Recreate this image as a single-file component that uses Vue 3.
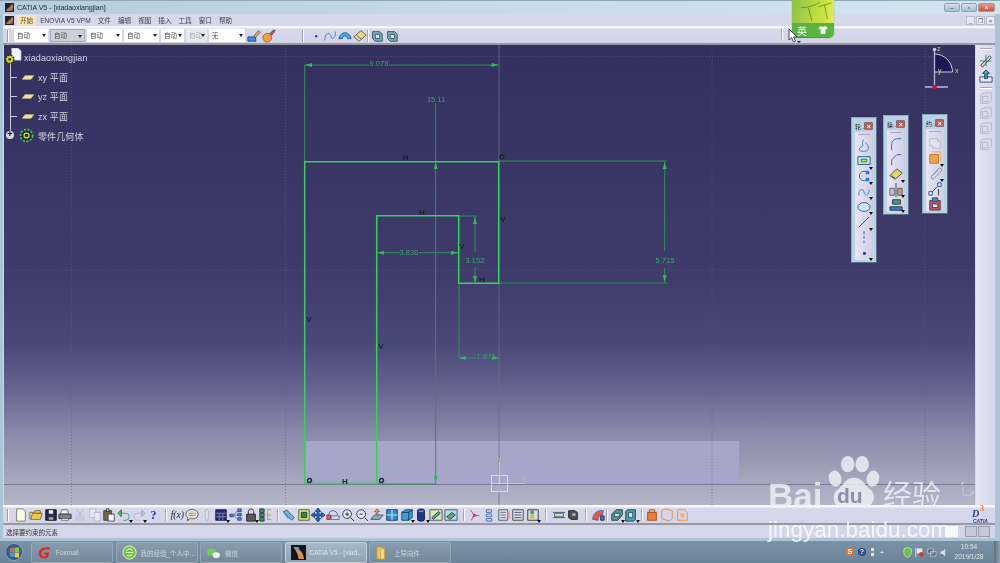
<template>
  <div class="screen">
    <!-- window chrome -->
    <div class="titlebar">
      <span class="app-logo"></span>
      <span class="title">CATIA V5 - [xiadaoxiangjian]</span>
      <div class="win-btns">
        <span class="wb">–</span>
        <span class="wb">▫</span>
        <span class="wb close">×</span>
      </div>
    </div>

    <div class="menubar">
      <span class="app-logo small"></span>
      <span v-for="m in menus" :key="m" class="menu" :class="{ active: m === '开始' }">{{ m }}</span>
      <div class="mdi-btns">
        <span>_</span><span>❐</span><span>×</span>
      </div>
    </div>

    <div class="toolbar top">
      <span class="grip"></span>
      <span
        v-for="(d, i) in combos"
        :key="i"
        class="combo"
        :class="{ sel: d.sel, dis: d.dis }"
        :style="{ width: d.w + 'px' }"
      >{{ d.t }}<i></i></span>
      <template v-for="(t, i) in topTools" :key="i">
        <span v-if="t.sep" class="sep" :style="{ marginLeft: t.ml + 'px', marginRight: t.mr + 'px' }"></span>
        <span v-else class="tool"><Ico :n="t.n" /></span>
      </template>
      <span class="sep far"></span>
    </div>

    <div class="main">
      <div class="canvas">
        <svg class="drawing" viewBox="4 45 971 460">
          <!-- pad seen edge-on -->
          <rect x="306" y="441" width="433" height="43" fill="#a6a6cb" />
          <!-- grid -->
          <g stroke="#5f5d88" stroke-width=".6" stroke-dasharray="1 2" fill="none">
            <path d="M4 56.5H975M4 270H975M71.5 45V505M285.5 45V505M712 45V505M925 45V505" />
          </g>
          <path d="M499 45V505" stroke="#6d6c90" stroke-width=".8" />
          <path d="M4 484.5H975" stroke="#6f6f8c" stroke-width=".8" />
          <!-- dimensions -->
          <g stroke="#2f9159" stroke-width="1" fill="none">
            <path d="M304.7 65V161M304.7 65H369M389 65H498.7" />
            <path d="M435.7 103V484M377 484H436" />
            <path d="M499 161H667M499 283H667M664.7 162V251M664.7 268V282" />
            <path d="M377 252.7H400M419 252.7H458" />
            <path d="M459 216H477M475 217V252M475 267V283" />
            <path d="M459 284V358M459 358H476M496 358H499" />
          </g>
          <g fill="#36b560">
            <path d="M305 65l7-2v4zM498.7 65l-7-2v4zM435.7 162l-2 7h4zM435.7 483l-2-7h4zM664.7 162l-2 7h4zM664.7 282l-2-7h4zM377 252.7l7-2v4zM458 252.7l-7-2v4zM475 217l-2 7h4zM475 283l-2-7h4zM459 358l7-2v4zM499 358l-7-2v4z" />
          </g>
          <g class="dim-text">
            <text x="379" y="66">9.078</text>
            <text x="436" y="102">15.11</text>
            <text x="409" y="255">3.836</text>
            <text x="475" y="263">3.152</text>
            <text x="665" y="263">5.715</text>
            <text x="486" y="359">1.872</text>
          </g>
          <!-- profile -->
          <path
            d="M304.7 483.5V161.7H498.7V283.3H458.7V215.7H376.7V483.5Z"
            fill="none"
            stroke="#37d15a"
            stroke-width="1.5"
          />
          <!-- constraints -->
          <g class="cons">
            <text x="405.6" y="160">H</text>
            <text x="422" y="215">H</text>
            <text x="482" y="282">H</text>
            <text x="503" y="222">V</text>
            <text x="462" y="249">V</text>
            <text x="309" y="322">V</text>
            <text x="381" y="349">V</text>
            <text x="345" y="484">H</text>
          </g>
          <g fill="none" stroke="#15302a" stroke-width="1.4">
            <circle cx="309.5" cy="480.5" r="2" />
            <circle cx="381.5" cy="480.5" r="2" />
            <circle cx="502" cy="157" r="2" />
          </g>
          <!-- sketch axes -->
          <rect x="491.5" y="475.5" width="16" height="16" fill="none" stroke="#d8d8e6" stroke-width="1" />
          <path d="M499.5 484V462M499.5 483.5H525" stroke="#d8d060" stroke-width="1.2" fill="none" />
          <path d="M499 475.5V491.5M491.5 483.5H507.5" stroke="#d8d8e6" stroke-width=".8" />
          <text x="499" y="461" class="axis-y">V</text>
          <text x="524" y="482" class="axis-y">H</text>
          <!-- compass -->
          <path d="M934.5 54V72H952.5A18 18 0 0 0 934.5 54Z" fill="#1c1a55" stroke="#c9c6ee" />
          <path d="M934.5 49V87M925 87H948" stroke="#b9b6e4" stroke-width="1.3" fill="none" />
          <circle cx="934.5" cy="49.5" r="1.8" fill="#c9c6ee" />
          <circle cx="934.5" cy="87" r="2.3" fill="#d01030" />
          <text x="937" y="51" class="axis-c">z</text>
          <text x="938" y="73" class="axis-c">y</text>
          <text x="955" y="73" class="axis-c">x</text>
          <!-- small corner axes -->
          <path d="M963 486V495H972" stroke="#d8d8e4" stroke-width=".7" fill="none" />
          <text x="961" y="485" class="axis-s">z</text>
          <text x="971" y="494" class="axis-s">x</text>
        </svg>

        <!-- specification tree -->
        <div class="tree">
          <span class="trunk"></span>
          <div class="node root">
            <svg class="root-ico" viewBox="0 0 18 18">
              <path d="M7 0h7l3 3v10H7z" fill="#f2f6fb" stroke="#90a8d0" stroke-width=".7" />
              <circle cx="5" cy="12" r="4.4" fill="#d8d22c" stroke="#243a16" stroke-width="1.6" stroke-dasharray="2 1" />
              <circle cx="5" cy="12" r="1.5" fill="#1c3a22" />
            </svg>
            xiadaoxiangjian
          </div>
          <div v-for="p in planes" :key="p" class="node branch">
            <span class="twig"></span>
            <svg class="plane" viewBox="0 0 12 5"><path d="M3 0.5H12L9 4.5H0Z" fill="#eee0a0" stroke="#c8b050" stroke-width=".4" /></svg>
            {{ p }} 平面
          </div>
          <div class="node branch body">
            <span class="plus">+</span>
            <svg class="gear" viewBox="0 0 16 16">
              <circle cx="8" cy="8" r="6.4" fill="#16303a" stroke="#4dc070" stroke-width="1.8" stroke-dasharray="2.4 1.4" />
              <circle cx="8" cy="8" r="2.6" fill="none" stroke="#d8d83a" stroke-width="1.4" />
            </svg>
            零件几何体
          </div>
        </div>

        <!-- floating toolbars -->
        <div v-for="p in palettes" :key="p.t" class="palette" :style="{ left: p.x + 'px', top: p.y + 'px' }">
          <div class="pal-head"><span>{{ p.t }}</span><b>×</b></div>
          <div class="pal-body">
            <span class="pal-grip"></span>
            <span v-for="(t, i) in p.tools" :key="i" class="pal-tool" :class="{ more: t.a }"><Ico :n="t.n" /></span>
          </div>
        </div>
      </div>

      <div class="side">
        <span class="side-grip"></span>
        <span class="tool"><Ico n="sketch" /></span>
        <span class="tool"><Ico n="exit" /></span>
        <span class="side-grip gap"></span>
        <span v-for="n in 4" :key="n" class="tool"><Ico n="ghost" /></span>
      </div>
    </div>

    <div class="toolbar bottom">
      <span class="grip"></span>
      <template v-for="(t, i) in bottomTools" :key="i">
        <span v-if="t.sep" class="sep" :style="{ marginLeft: t.sep[0] + 'px', marginRight: t.sep[1] + 'px' }"></span>
        <span v-else-if="t.txt" class="tool txt" :class="t.c">{{ t.txt }}</span>
        <span v-else class="tool" :class="{ more: t.a }"><Ico :n="t.n" /></span>
      </template>
      <span class="ds-logo"><b>3</b><em>D</em><i>CATIA</i></span>
    </div>

    <div class="statusbar">
      <span class="status-text">选择要约束的元素</span>
      <span class="status-input"></span>
      <span class="status-btn"></span>
      <span class="status-btn"></span>
    </div>
    <div class="status-gap"></div>

    <div class="taskbar">
      <span class="orb">
        <svg viewBox="0 0 12 12">
          <path d="M1 2l4.5-.8V5.6H1z" fill="#f0603a" />
          <path d="M6.2 1.1L11 .4v5.2H6.2z" fill="#8cc83c" />
          <path d="M1 6.4h4.5v4.4L1 10z" fill="#3a9ae8" />
          <path d="M6.2 6.4H11v5.2l-4.8-.7z" fill="#f4c830" />
        </svg>
      </span>
      <div v-for="b in tasks" :key="b.t" class="task" :class="{ on: b.on }">
        <svg class="task-ico" viewBox="0 0 16 16">
          <path v-for="(p, i) in I[b.n]" :key="i" :d="p[0]" :fill="p[1]" :stroke="p[2] || 'none'" />
        </svg>
        <span>{{ b.t }}</span>
      </div>
      <div class="tray">
        <span class="tray-dot s">S</span>
        <span class="tray-dot q">?</span>
        <span class="tray-pair"></span>
        <span class="tray-up"></span>
        <svg class="tray-ico wide" viewBox="0 0 48 12">
          <path d="M1 2l4-1.5L9 2v4c0 3-2 4.5-4 5.5C3 10.500 1 9 1 6z" fill="#6cc04a" stroke="#e8f4d8" stroke-width=".7" />
          <path d="M14 1V11" stroke="#dde" /><path d="M15 1.500h6V7h-6z" fill="#e8e8ee" /><circle cx="20" cy="8" r="2.600" fill="#d83838" />
          <path d="M27 2h6v5h-6zM30 5h6v5h-6z" fill="#5a6c7c" stroke="#dde" stroke-width=".7" />
          <path d="M41 4.500h2L46 2v8L43 7.500h-2z" fill="#dde" />
        </svg>
        <div class="clock"><span>10:54</span><span>2019/1/28</span></div>
        <span class="show-desk"></span>
      </div>
    </div>

    <!-- IME floating widget -->
    <div class="ime">
      <div class="ime-top">
        <svg viewBox="0 0 42 24">
          <path d="M8 8Q20 8 28 2M16 8L20 22M27 7Q34 5 40 3M33 5L36 20" stroke="#3f7f2a" stroke-width=".7" fill="none" />
        </svg>
      </div>
      <div class="ime-bot">
        <span>英</span>
        <svg viewBox="0 0 12 10"><path d="M3 0L0 2.500 2 4.500 3 4V10H9V4L10 4.500 12 2.500 9 0Q6 2 3 0Z" fill="#f2f8ea" /></svg>
      </div>
    </div>
    <svg class="cursor" viewBox="0 0 10 14"><path d="M1 0V11L3.500 8.600 5.500 13 7.500 12 5.500 8H9Z" fill="#fff" stroke="#223" stroke-width=".8" /></svg>
    <span class="cursor-arrow"></span>

    <!-- watermark -->
    <div class="mark">
      <svg class="paw" viewBox="0 0 60 62">
        <ellipse cx="9" cy="25" rx="7" ry="9" transform="rotate(-14 9 25)" />
        <ellipse cx="23" cy="9" rx="7.500" ry="9" />
        <ellipse cx="39" cy="9" rx="7.500" ry="9" />
        <ellipse cx="51" cy="25" rx="7" ry="9" transform="rotate(14 51 25)" />
        <path d="M30 24C40 24 42 33 48 37 56 43 52 57 41 57 36 57 34 55 30 55 26 55 23 57 18 57 7 57 4 43 12 37 18 33 20 24 30 24Z" />
      </svg>
      <div class="mark-row"><span class="bai">Bai</span><span class="du">du</span><span class="jy">经验</span></div>
      <div class="mark-url">jingyan.baidu.com</div>
    </div>
  </div>
</template>

<script setup>
import { h } from 'vue'

// every icon is a list of [d, fill, stroke] on a 16x16 grid
const I = {
  brush: [['M1 9h9v5H1z', '#3c8ad8', '#1c4a90'], ['M8 8l5-6 2 2-6 6z', '#e0c050', '#555']],
  ball: [['M1 10a5 5 0 1 0 10 0a5 5 0 1 0-10 0', '#f0a040', '#c05030'], ['M9 5l5-4 1 1-4 5z', '#dd5060', '#345']],
  dot: [['M7 7h2.500v2.500H7z', '#1a3a90']],
  curve: [['M2 13C2 6 6 3 8 6S9 12 12 10 14 5 14 3', 'none', '#2a80c8']],
  arc: [['M1 11C3 2 13 2 15 11L11 11C10 7 6 7 5 11Z', '#48a8e8', '#1c5a98']],
  eraser: [['M1 9L9 2 15 7 7 14Z', '#ecd878', '#556'], ['M4 7l6 5', 'none', '#667']],
  cube1: [['M3 3h8l3 3v8H6l-3-3z', '#7fb0b8', '#284a60'], ['M6 6h5v5H6z', '#d8e8ee', '#284a60']],
  doc: [['M3 1h7l3 3v11H3z', '#fbf8e4', '#777']],
  open: [['M1 5h5l1-2h6v3H4L2 13h11l2-7H4', '#f0c850', '#8a6a20'], ['M1 5v8', 'none', '#8a6a20']],
  save: [['M2 2h12v12H2z', '#232a58', '#111'], ['M5 2h6v5H5z', '#eef', '#333'], ['M5 10h6v4H5z', '#aab', '#333']],
  print: [['M4 2h7l1 5H3z', '#eee', '#666'], ['M1 7h14v5H1z', '#7a8090', '#333'], ['M4 12h8v2H4z', '#fff', '#666']],
  cut: [['M4 1l6 9M12 1L6 10', 'none', '#b4b4c4'], ['M3 12a2 2 0 1 0 4 0a2 2 0 1 0-4 0M9 12a2 2 0 1 0 4 0a2 2 0 1 0-4 0', 'none', '#b4b4c4']],
  copy: [['M2 1h7v10H2z', '#e8e8f2', '#b4b4c4'], ['M7 5h7v10H7z', '#e8e8f2', '#b4b4c4']],
  paste: [['M2 3h9v11H2z', '#7a6a40', '#333'], ['M5 1h3v3H5z', '#ccc', '#333'], ['M7 7h7v8H7z', '#f6f6fb', '#445']],
  undo: [['M3 6h7a4 4 0 0 1 0 8H7', 'none', '#2a9a90'], ['M1 6l4-4v8z', '#48b848', '#2a7a40']],
  redo: [['M13 6H6a4 4 0 0 0 0 8h3', 'none', '#b8b8c8'], ['M15 6l-4-4v8z', '#c0c0d0', '#a8a8b8']],
  talk: [['M1 7c0-7 14-7 14 0s-8 5-10 5l-2 3V11C2 10 1 9 1 7', '#ece6d8', '#555'], ['M4 6h8M4 8.500h8', 'none', '#888']],
  pin: [['M8 2a2 2 0 0 1 2 2v8a2 2 0 0 1-4 0V4a2 2 0 0 1 2-2', '#dcdce8', '#b0b0c0']],
  table: [['M2 2h12v12H2z', '#262a68', '#151540'], ['M2 6h12M2 10h12M6 6v8M10 6v8', 'none', '#8a8ab8']],
  net: [['M1 7h4v3H1zM10 1h4v3h-4zM10 6h4v3h-4zM10 11h4v3h-4z', '#5a88c8', '#2a4a88'], ['M5 8l5-5M5 8h5M5 8l5 5', 'none', '#4a6aa8']],
  lock: [['M3 7h10v8H3z', '#585860', '#222'], ['M5 7V4a3 3 0 0 1 6 0v3', 'none', '#333']],
  tree: [['M2 1h5v4H2zM2 6h5v4H2zM2 11h5v4H2z', '#4a9058', '#234'], ['M11 2h4M11 8h4M11 13h4M11 1v13', 'none', '#b89a30']],
  meas: [['M1 3l6 9', 'none', '#2a80c8'], ['M5 2l9 9-3 3-9-9z', '#70b8d8', '#1c5a80']],
  fit: [['M2 2h12v12H2z', '#c8e870', '#555'], ['M5 5h6v6H5z', '#3a8a3a', '#234']],
  pan: [['M8 0l3 4H9v3h3V5l4 3-4 3V9H9v3h2l-3 4-3-4h2V9H4v2L0 8l4-3v2h3V4H5z', '#2868c0', '#183a78']],
  rot: [['M3 8a5 5 0 1 1 10 0', 'none', '#2a68b8'], ['M1 8h4v5H1z', '#e86048', '#733'], ['M6 9h9v4H6z', '#e0e0f0', '#557']],
  zin: [['M2 7a5 5 0 1 0 10 0a5 5 0 1 0-10 0', '#dfe8f4', '#334'], ['M11 11l4 4', 'none', '#222'], ['M5 7h4M7 5v4', 'none', '#222']],
  zout: [['M2 7a5 5 0 1 0 10 0a5 5 0 1 0-10 0', '#dfe8f4', '#334'], ['M11 11l4 4', 'none', '#222'], ['M5 7h4', 'none', '#222']],
  norm: [['M1 13L5 8h10l-4 5z', '#88b0c0', '#357'], ['M8 1l3 3H9v4H7V4H5z', '#e8a848', '#864']],
  multi: [['M2 2h12v12H2z', '#2a90d8', '#134'], ['M8 2v12M2 8h12', 'none', '#e8f0f8']],
  iso: [['M2 5l4-3h8v9l-4 3H2z', '#3aa0e0', '#145'], ['M2 5h8v9M10 5l4-3', 'none', '#134']],
  cyl: [['M4 3a4 2 0 0 1 8 0v10a4 2 0 0 1-8 0z', '#1c3a88', '#123'], ['M4 3a4 2 0 0 0 8 0', '#8ac0ea', '#123']],
  photo: [['M1 2h14v12H1z', '#d8e8a8', '#456'], ['M3 11l8-7 2 2-8 7z', '#58a0b8', '#345']],
  photo2: [['M1 2h14v12H1z', '#b0dcec', '#456'], ['M3 10l6-5 4 3-6 5z', '#60a868', '#345']],
  axisred: [['M4 2l4 6 6 1M8 8l-3 6', 'none', '#d03050'], ['M7 7h3v3H7z', '#d03050']],
  stack: [['M5 2h6v3H5zM5 7h6v3H5zM5 12h6v3H5z', '#c8d8ee', '#4468a8']],
  pane: [['M2 2h10v12H2z', '#dcdce6', '#555'], ['M4 5h6M4 8h6M4 11h6', 'none', '#4a6a98'], ['M12 4h3v8h-3z', '#e8a088']],
  pane2: [['M2 2h12v12H2z', '#dcdce6', '#444'], ['M4 5h8M4 8h8M4 11h8', 'none', '#3a4a78']],
  light: [['M2 2h12v12H2z', '#d8d8e0', '#333'], ['M5 3h4v4H5z', '#38a848'], ['M5 8h4v4H5z', '#e0b830']],
  bars: [['M1 5h14M1 11h14', 'none', '#1c5aa8'], ['M3 6h10v4H3z', '#dcd8b0', '#555']],
  dark: [['M3 3h7l3 2v8H6l-3-2z', '#505058', '#222'], ['M7 6h4v3H7z', '#aab']],
  rainbow: [['M2 13C2 6 8 2 14 3L13 8C10 8 8 10 8 14z', '#e85848', '#3468b0'], ['M11 9h4v5h-4z', '#4868c8', '#234']],
  slab: [['M2 7L7 2h7v6l-5 6H2z', '#50a090', '#234'], ['M5 6h6v4H5z', '#c8e0e0', '#345']],
  slab2: [['M4 2h9v11l-2 2H2V4z', '#48a8b0', '#234'], ['M5 5h5v6H5z', '#c0e4e8', '#345']],
  org1: [['M3 5h10v9H3z', '#f08030', '#a04a10'], ['M5 2h6v3H5z', '#f8c090', '#a04a10']],
  org2: [['M2 3l4-2 8 2v9l-4 3-8-3z', 'none', '#f08a30']],
  org3: [['M3 2h8l3 3v9H3z', 'none', '#f08a30'], ['M6 6h5v5H6z', '#f8b070']],
  sketch: [['M2 13L12 2l2 2L4 15z', '#d8d8c8', '#335'], ['M1 8h13M8 1v13', 'none', '#2a8a58']],
  exit: [['M1 9h14v6H1z', '#e8e8f4', '#234a70'], ['M8 1l4 4H9.500v6h-3V5H4z', '#48b0a0', '#135']],
  ghost: [['M2 3l4-2h8v9l-4 3H2z', '#dcdce8', '#b4b4c6'], ['M4 5h6v6H4z', 'none', '#b4b4c6']],
  profile: [['M8 1C4 3 9 7 5 9S2 14 6 14 13 14 13 10 10 6 10 4', 'none', '#2a7ab8']],
  rect: [['M1 3h14v9H1z', '#bfe8e0', '#185878'], ['M5 6h6v3H5z', '#d8e838', '#456']],
  circ: [['M12 4A5.500 5.500 0 1 0 12 12', 'none', '#1c58b0'], ['M10 2h4v4h-4zM10 10h4v4h-4z', '#2a78d0']],
  spline: [['M2 12C2 4 7 3 8 8S13 13 14 5', 'none', '#2a7ab8']],
  oval: [['M1 8a7 5 0 1 0 14 0a7 5 0 1 0-14 0', '#cfe4f4', '#1c58a0']],
  line: [['M2 14L14 2', 'none', '#14406a']],
  axisv: [['M8 1V5M8 7V10M8 12V15', 'none', '#1c58b0']],
  pt: [['M7 7h3v3H7z', '#14306a']],
  fillet: [['M3 15V9C3 5 6 2 10 2H14', 'none', '#1c5aa8']],
  chamfer: [['M3 15V9L9 3H14', 'none', '#1c5aa8']],
  trim: [['M1 10L9 2 15 7 7 14Z', '#e8d860', '#445'], ['M3 10l4 3', 'none', '#445']],
  mirror: [['M8 0V16', 'none', '#334'], ['M1 6h5v8H1z', '#c8c8d0', '#556'], ['M10 6h5v8h-5z', '#c0a070', '#556']],
  proj: [['M4 2h9v5H4z', '#4a9a70', '#234'], ['M1 10h14v4H1z', '#3a7ac0', '#234']],
  ghost2: [['M2 3h9v3h3v8H5v-3H2z', '#e2e2ec', '#b8b8c8']],
  constr: [['M2 4h10v10H2z', '#f4a050', '#c87020'], ['M4 1h10v10', 'none', '#e8a868']],
  clip: [['M4 12L12 3a2 2 0 0 1 3 3L7 14a1.500 1.500 0 0 1-3-2L11 5', 'none', '#7a8a9a']],
  dimc: [['M2 14L13 3', 'none', '#1c4aa0'], ['M1 11h4v4H1zM11 1h4v4h-4z', '#e8e8f0', '#1c4aa0'], ['M12 8v7', 'none', '#333']],
  animc: [['M2 4h12v11H2z', '#c85060', '#444'], ['M5 1h6v4H5z', '#4a88c8', '#345'], ['M5 8h6v4H5z', '#e8e8f0', '#345']],
  fox: [['M14 3C7 1 1 5 2 10S9 15 12 13L13 8H8L7 10H10L9 12C6 13 4 11 5 8S10 4 13 5Z', '#e02a20']],
  ie: [['M1 8a7 7 0 1 0 14 0a7 7 0 1 0-14 0', '#72c83c', '#e8f4d8'], ['M4 8h8M5 6c2-3 5-2 6 0M5 11c3 1 5 0 6-1', 'none', '#fff']],
  wx: [['M1 7C1 3 10 2 11 7S4 12 3 11L2 12V10C1 9 1 8 1 7', '#74cc4c'], ['M7 10C7 7 15 7 15 10.500S11 14 10 13.500L8.500 14.500V13C8 12.500 7 12 7 10', '#f2f4f0']],
  cat: [['M0 0h16v16H0z', '#121420'], ['M3 3C9 3 13 8 14 15L8 15C8 11 6 7 3 3', '#e09040'], ['M2 2h6l2 5z', '#5a98d8']],
  folder: [['M2 2h5l2 2v11H2z', '#e8c860', '#b89838'], ['M6 4h4v11H6z', '#f4dc88', '#c8a848']],
}

// functional icon, used everywhere a toolbar button is drawn
const Ico = (p) =>
  h(
    'svg',
    { viewBox: '0 0 16 16', class: 'ico' },
    I[p.n].map((s) => h('path', { d: s[0], fill: s[1], stroke: s[2] || 'none', 'stroke-width': 1 })),
  )
Ico.props = ['n']

const menus = ['开始', 'ENOVIA V5 VPM', '文件', '编辑', '视图', '插入', '工具', '窗口', '帮助']

const combos = [
  { w: 34, t: '自动' },
  { w: 35, t: '自动', sel: true },
  { w: 35, t: '自动' },
  { w: 35, t: '自动' },
  { w: 23, t: '自动' },
  { w: 21, t: '自动', dis: true },
  { w: 36, t: '无' },
]

const topTools = [
  { n: 'brush' },
  { n: 'ball' },
  { sep: true, ml: 26, mr: 4 },
  { n: 'dot' },
  { n: 'curve' },
  { n: 'arc' },
  { n: 'eraser' },
  { sep: true, ml: 0, mr: 1 },
  { n: 'cube1' },
  { n: 'cube1' },
]

const planes = ['xy', 'yz', 'zx']

const palettes = [
  {
    t: '轮..',
    x: 847,
    y: 72,
    tools: [
      { n: 'profile' },
      { n: 'rect', a: true },
      { n: 'circ', a: true },
      { n: 'spline', a: true },
      { n: 'oval', a: true },
      { n: 'line', a: true },
      { n: 'axisv' },
      { n: 'pt', a: true },
    ],
  },
  {
    t: '操..',
    x: 879,
    y: 70,
    tools: [
      { n: 'fillet' },
      { n: 'chamfer' },
      { n: 'trim', a: true },
      { n: 'mirror', a: true },
      { n: 'proj', a: true },
    ],
  },
  {
    t: '约..',
    x: 918,
    y: 69,
    tools: [
      { n: 'ghost2' },
      { n: 'constr', a: true },
      { n: 'clip', a: true },
      { n: 'dimc' },
      { n: 'animc' },
    ],
  },
]

const bottomTools = [
  { n: 'doc' }, { n: 'open' }, { n: 'save' }, { n: 'print' }, { n: 'cut' }, { n: 'copy' }, { n: 'paste' },
  { n: 'undo', a: true }, { n: 'redo', a: true }, { txt: '?', c: 'help' },
  { sep: [4, 3] },
  { txt: 'f(x)', c: 'fx' }, { n: 'talk' }, { n: 'pin' }, { n: 'table', a: true }, { n: 'net' }, { n: 'lock', a: true }, { n: 'tree' },
  { sep: [4, 3] },
  { n: 'meas' }, { n: 'fit' }, { n: 'pan' }, { n: 'rot' }, { n: 'zin' }, { n: 'zout' }, { n: 'norm' }, { n: 'multi' },
  { n: 'iso', a: true }, { n: 'cyl', a: true }, { n: 'photo' }, { n: 'photo2' },
  { sep: [5, 2] },
  { n: 'axisred' }, { n: 'stack' }, { n: 'pane' }, { n: 'pane2' }, { n: 'light', a: true },
  { sep: [5, 4] },
  { n: 'bars' }, { n: 'dark' },
  { sep: [4, 4] },
  { n: 'rainbow' },
  { sep: [1, 1] },
  { n: 'slab', a: true }, { n: 'slab2', a: true },
  { sep: [2, 2] },
  { n: 'org1' }, { n: 'org2' }, { n: 'org3' },
]

const tasks = [
  { t: 'Foxmail', n: 'fox' },
  { t: '我的经验_个人中...', n: 'ie' },
  { t: '微信', n: 'wx' },
  { t: 'CATIA V5 - [xiad...', n: 'cat', on: true },
  { t: '上导向件', n: 'folder' },
]
</script>

<style>
html,
body {
  margin: 0;
  background: #6c8398;
}
</style>

<style scoped>
.screen {
  position: relative;
  width: 1000px;
  height: 563px;
  overflow: hidden;
  display: flex;
  flex-direction: column;
  font-family: "Liberation Sans", "Noto Sans CJK SC", sans-serif;
  font-size: 7px;
  color: #3a3a4a;
  background: #a9c6d8;
  filter: blur(0.35px);
}

/* title and menu */
.titlebar {
  height: 14px;
  flex: none;
  display: flex;
  align-items: center;
  padding: 0 5px;
  box-sizing: border-box;
  background: linear-gradient(90deg, #b4ccdc, #c8dbe8 50%, #d2e4ee);
  border-top: 1px solid #8fa8b8;
}
.title {
  margin-left: 3px;
  font-size: 7px;
  color: #2a2a30;
}
.app-logo {
  width: 9px;
  height: 9px;
  background: linear-gradient(135deg, #1a2030 35%, #d88a40 60%, #2a4a80);
  border: 1px solid #223;
  box-sizing: border-box;
}
.app-logo.small {
  margin-right: 3px;
}
.win-btns {
  margin-left: auto;
  display: flex;
  gap: 1px;
}
.wb {
  width: 16px;
  height: 9px;
  line-height: 8px;
  text-align: center;
  color: #445;
  border: 1px solid #8ea4b4;
  box-sizing: border-box;
  border-radius: 2px;
  background: linear-gradient(#d4e2ec, #a6bccc);
}
.wb.close {
  width: 17px;
  color: #fff;
  background: linear-gradient(#e49a88, #c8503c);
}

.menubar,
.toolbar,
.main,
.statusbar {
  margin: 0 5px 0 3px;
}
.menubar {
  height: 12px;
  flex: none;
  display: flex;
  align-items: center;
  padding-left: 2px;
  background: #d8d8ec;
}
.menu {
  margin-right: 7px;
  font-size: 6.6px;
  line-height: 11px;
  color: #3c3c4a;
}
.menu.active {
  margin-right: 4px;
  padding: 0 3px;
  background: #f6e6bc;
  color: #6a4a10;
}
.mdi-btns {
  margin-left: auto;
  display: flex;
  gap: 1px;
}
.mdi-btns span {
  width: 9px;
  height: 9px;
  font-size: 6px;
  line-height: 9px;
  text-align: center;
  color: #556;
  background: #e8e8f2;
  border: 1px solid #bcbcd0;
  box-sizing: border-box;
}

/* toolbars */
.toolbar {
  flex: none;
  display: flex;
  align-items: center;
  background: linear-gradient(#f6f6fc 0, #f6f6fc 8%, #d8d8ec 16%, #d4d4ea 88%, #98989f 92%, #98989f 100%);
}
.toolbar.top {
  height: 19px;
  padding-left: 4px;
}
.toolbar.bottom {
  height: 20px;
  padding-left: 4px;
}
.grip {
  width: 1px;
  height: 12px;
  margin-right: 5px;
  background: #9c9cb0;
  border-right: 1px solid #fff;
  flex: none;
}
.combo {
  position: relative;
  height: 13px;
  margin-right: 2px;
  padding-left: 3px;
  box-sizing: border-box;
  line-height: 13px;
  font-size: 6.5px;
  color: #444;
  background: #fff;
  flex: none;
}
.combo.sel {
  background: #cfcfdc;
  border: 1px solid #aaaabc;
  line-height: 11px;
}
.combo.dis {
  color: #aaa;
  background: #e8e8f0;
}
.combo i {
  position: absolute;
  right: 2px;
  top: 5px;
  border: 2px solid transparent;
  border-top: 3px solid #222;
  border-bottom: 0;
}
.sep {
  flex: none;
  width: 1px;
  height: 12px;
  background: #a4a4b8;
  border-right: 1px solid #fff;
}
.sep.far {
  position: absolute;
  left: 781px;
  top: 28px;
  margin: 0;
}
.tool {
  position: relative;
  flex: none;
  width: 14.7px;
  height: 14px;
  display: flex;
  align-items: center;
  justify-content: center;
}
.tool.more::after,
.pal-tool.more::after {
  content: "";
  position: absolute;
  right: -1px;
  bottom: -1px;
  border: 2px solid transparent;
  border-top: 3px solid #111;
  border-bottom: 0;
}
.ico {
  width: 14px;
  height: 14px;
  display: block;
}
.txt {
  font-family: "Liberation Serif", serif;
}
.help {
  font-size: 12px;
  font-weight: 700;
  color: #1c3a90;
}
.fx {
  font-size: 9.500px;
  font-style: italic;
  color: #222;
}

/* 3D area */
.main {
  flex: 1;
  min-height: 0;
  display: flex;
  padding-left: 1px;
  background: #d6d6ea;
}
.canvas {
  position: relative;
  width: 971px;
  flex: none;
  background: linear-gradient(#33305f 0, #3f3c6c 50%, #4a4877 65%, #666590 75%, #8b8bab 85%, #b5b5c8 100%);
}
.drawing {
  position: absolute;
  inset: 0;
  width: 971px;
  height: 460px;
}
.dim-text text {
  font-size: 7.500px;
  fill: #35a868;
  text-anchor: middle;
}
.cons text {
  font-size: 8px;
  font-weight: 700;
  fill: #12281f;
  text-anchor: middle;
}
.axis-y {
  font-size: 7px;
  fill: #c8c050;
  text-anchor: middle;
}
.axis-c {
  font-size: 7px;
  fill: #e0d070;
}
.axis-s {
  font-size: 6px;
  fill: #dcdce6;
}

.side {
  flex: none;
  width: 19px;
  margin-left: 1px;
  display: flex;
  flex-direction: column;
  align-items: center;
  background: linear-gradient(90deg, #e4e4f2, #d6d6ea);
}
.side .tool {
  height: 15.200px;
}
.side-grip {
  width: 12px;
  height: 1px;
  margin: 3px 0;
  background: #a8a8bc;
  border-bottom: 1px solid #fff;
  flex: none;
}
.side-grip.gap {
  margin: 4px 0 2px;
}

/* tree */
.tree {
  position: absolute;
  left: 5px;
  top: 3px;
  width: 100px;
  font-size: 9px;
  letter-spacing: 0.1px;
  color: #d4d4e8;
}
.trunk {
  position: absolute;
  left: 0.5px;
  top: 15px;
  bottom: 8px;
  width: 1px;
  background: #c8c8dc;
}
.node {
  position: relative;
  height: 19.6px;
  display: flex;
  align-items: center;
  white-space: nowrap;
}
.root {
  padding-left: 15px;
}
.root-ico {
  position: absolute;
  left: -4px;
  top: 0;
  width: 17px;
  height: 17px;
}
.branch {
  padding-left: 29px;
}
.twig {
  position: absolute;
  left: 1px;
  top: 9px;
  width: 7px;
  height: 1px;
  background: #c8c8dc;
}
.plane {
  position: absolute;
  left: 13px;
  top: 7px;
  width: 12px;
  height: 5px;
}
.body .gear {
  position: absolute;
  left: 10px;
  top: 2px;
  width: 15px;
  height: 15px;
}
.plus {
  position: absolute;
  left: -3px;
  top: 5px;
  width: 8px;
  height: 8px;
  line-height: 7px;
  font-size: 9px;
  text-align: center;
  border-radius: 50%;
  background: #d8d8e6;
  color: #000;
  font-weight: 700;
}

/* floating palettes */
.palette {
  position: absolute;
  width: 26px;
  box-sizing: border-box;
  padding: 2px 3px;
  background: #b8d2e6;
  border: 1px solid #7a94ac;
  border-color: #8ea8c0 #5a6e8c #5a6e8c #8ea8c0;
}
.pal-head {
  height: 12px;
  display: flex;
  align-items: center;
  justify-content: space-between;
  font-size: 6px;
  color: #223;
}
.pal-head b {
  width: 9px;
  height: 8px;
  line-height: 8px;
  text-align: center;
  font-size: 7px;
  color: #fff;
  border-radius: 1px;
  background: #c45c50;
  border: 1px solid #8c6a70;
  box-sizing: border-box;
}
.pal-body {
  display: flex;
  flex-direction: column;
  align-items: center;
  padding: 2px 0 0;
  background: linear-gradient(90deg, #e6e6f4, #cfcfe4);
}
.pal-grip {
  width: 12px;
  height: 1px;
  margin-bottom: 3px;
  background: #a8a8bc;
}
.pal-tool {
  position: relative;
  width: 16px;
  height: 15.300px;
  display: flex;
  align-items: center;
  justify-content: center;
}

/* Bottom bars */
.ds-logo {
  position: absolute;
  left: 970px;
  top: 505px;
  width: 23px;
  height: 19px;
  font-family: "Liberation Serif", serif;
  line-height: 1;
  color: #283a90;
}
.ds-logo b {
  position: absolute;
  left: 10px;
  top: 0;
  font-size: 8px;
  color: #e08030;
}
.ds-logo em {
  position: absolute;
  left: 2px;
  top: 4px;
  font-size: 10px;
  font-weight: 700;
}
.ds-logo i {
  position: absolute;
  left: 3px;
  top: 14px;
  font-family: "Liberation Sans", sans-serif;
  font-size: 5px;
  font-weight: 700;
}
.statusbar {
  height: 13px;
  flex: none;
  display: flex;
  align-items: center;
  padding-left: 3px;
  box-sizing: border-box;
  background: #d6d6ea;
}
.status-gap {
  height: 3px;
  flex: none;
}
.status-text {
  font-size: 6.500px;
  color: #333;
}
.status-input {
  margin-left: auto;
  margin-right: 7px;
  width: 13px;
  height: 11px;
  background: #f8f8fc;
}
.status-btn {
  width: 12px;
  height: 11px;
  margin-right: 1px;
  background: #c8c8d6;
  border: 1px solid #9a9aac;
  box-sizing: border-box;
}
.status-btn:last-child {
  margin-right: 5px;
}

.taskbar {
  height: 22px;
  flex: none;
  display: flex;
  align-items: stretch;
  padding-left: 31px;
  position: relative;
  background: linear-gradient(#7b92a6, #6b8398);
}
.orb {
  position: absolute;
  left: 5px;
  top: 2px;
  width: 18px;
  height: 18px;
  border-radius: 50%;
  display: flex;
  align-items: center;
  justify-content: center;
  background: radial-gradient(#4a7ab0, #24486c);
  border: 1px solid #8aa4b8;
  box-sizing: border-box;
}
.orb svg {
  width: 11px;
  height: 11px;
}
.task {
  width: 82px;
  margin-right: 2.500px;
  margin-top: 1px;
  display: flex;
  align-items: center;
  padding-left: 5px;
  box-sizing: border-box;
  font-size: 6.500px;
  color: #ccd6de;
  background: linear-gradient(#889cae, #74899c);
  border: 1px solid #96a8b8;
  border-radius: 2px;
}
.task.on {
  background: linear-gradient(#a8b8c6, #8ea2b2);
  border-color: #c4d0da;
  color: #dfe6ec;
}
.task-ico {
  width: 15px;
  height: 15px;
  margin-right: 4px;
  flex: none;
}
.tray {
  position: absolute;
  right: 0;
  top: 0;
  bottom: 0;
  width: 154px;
  display: flex;
  align-items: center;
}
.tray-dot {
  width: 8px;
  height: 8px;
  margin-right: 4px;
  border-radius: 50%;
  font-size: 7px;
  line-height: 8px;
  text-align: center;
  font-weight: 700;
  color: #fff;
}
.tray-dot.s {
  background: #e87838;
}
.tray-dot.q {
  background: #2a4a98;
}
.tray-pair {
  width: 3px;
  height: 8px;
  margin: 0 6px 0 1px;
  background: linear-gradient(#e8eef2 38%, transparent 38%, transparent 62%, #e8eef2 62%);
}
.tray-up {
  border: 2px solid transparent;
  border-bottom: 2px solid #d8e0e6;
  border-top: 0;
  margin-right: 18px;
}
.tray-ico.wide {
  width: 46px;
  height: 11px;
  flex: none;
}
.clock {
  flex: none;
  width: 42px;
  display: flex;
  flex-direction: column;
  align-items: center;
  font-size: 6.500px;
  line-height: 10px;
  color: #e0e6ea;
}
.show-desk {
  margin-left: auto;
  width: 6px;
  height: 100%;
  background: linear-gradient(90deg, #5a6e80, #8ea2b2);
}

/* overlays */
.ime {
  position: absolute;
  left: 792px;
  top: 0;
  width: 42px;
  height: 37px;
  border-radius: 0 0 5px 5px;
  overflow: hidden;
  box-shadow: 0 1px 1px #4a8a30;
}
.ime-top {
  height: 23px;
  background: linear-gradient(100deg, #8fc04a, #c4e040 65%, #e4ec50);
}
.ime-top svg {
  display: block;
  width: 42px;
  height: 23px;
}
.ime-bot {
  height: 14px;
  display: flex;
  align-items: center;
  justify-content: space-between;
  padding: 0 6px 0 5px;
  font-size: 10px;
  color: #f4f8ec;
  background: #58b43e;
}
.ime-bot svg {
  width: 10px;
  height: 8px;
}
.cursor {
  position: absolute;
  left: 788px;
  top: 29px;
  width: 10px;
  height: 14px;
}
.cursor-arrow {
  position: absolute;
  left: 797px;
  top: 41px;
  border: 2px solid transparent;
  border-top: 2px solid #222;
  border-bottom: 0;
}
.mark {
  position: absolute;
  left: 768px;
  top: 456px;
  width: 180px;
  height: 90px;
  color: rgba(240, 240, 246, 0.82);
  pointer-events: none;
}
.paw {
  position: absolute;
  left: 59px;
  top: 0;
  width: 54px;
  height: 56px;
  fill: rgba(240, 240, 246, 0.82);
}
.mark-row {
  position: absolute;
  top: 25px;
  left: 0;
  width: 180px;
  display: flex;
  align-items: center;
  height: 30px;
}
.bai {
  width: 60px;
  font-size: 35px;
  line-height: 30px;
  font-weight: 700;
}
.du {
  width: 55px;
  padding-left: 9px;
  box-sizing: border-box;
  font-size: 21px;
  font-weight: 700;
  color: #8d8da9;
}
.jy {
  font-size: 29px;
  line-height: 30px;
}
.mark-url {
  position: absolute;
  top: 60px;
  left: 0;
  width: 180px;
  font-size: 22.500px;
  line-height: 28px;
  white-space: nowrap;
  color: rgba(250, 250, 254, 0.85);
}
</style>
